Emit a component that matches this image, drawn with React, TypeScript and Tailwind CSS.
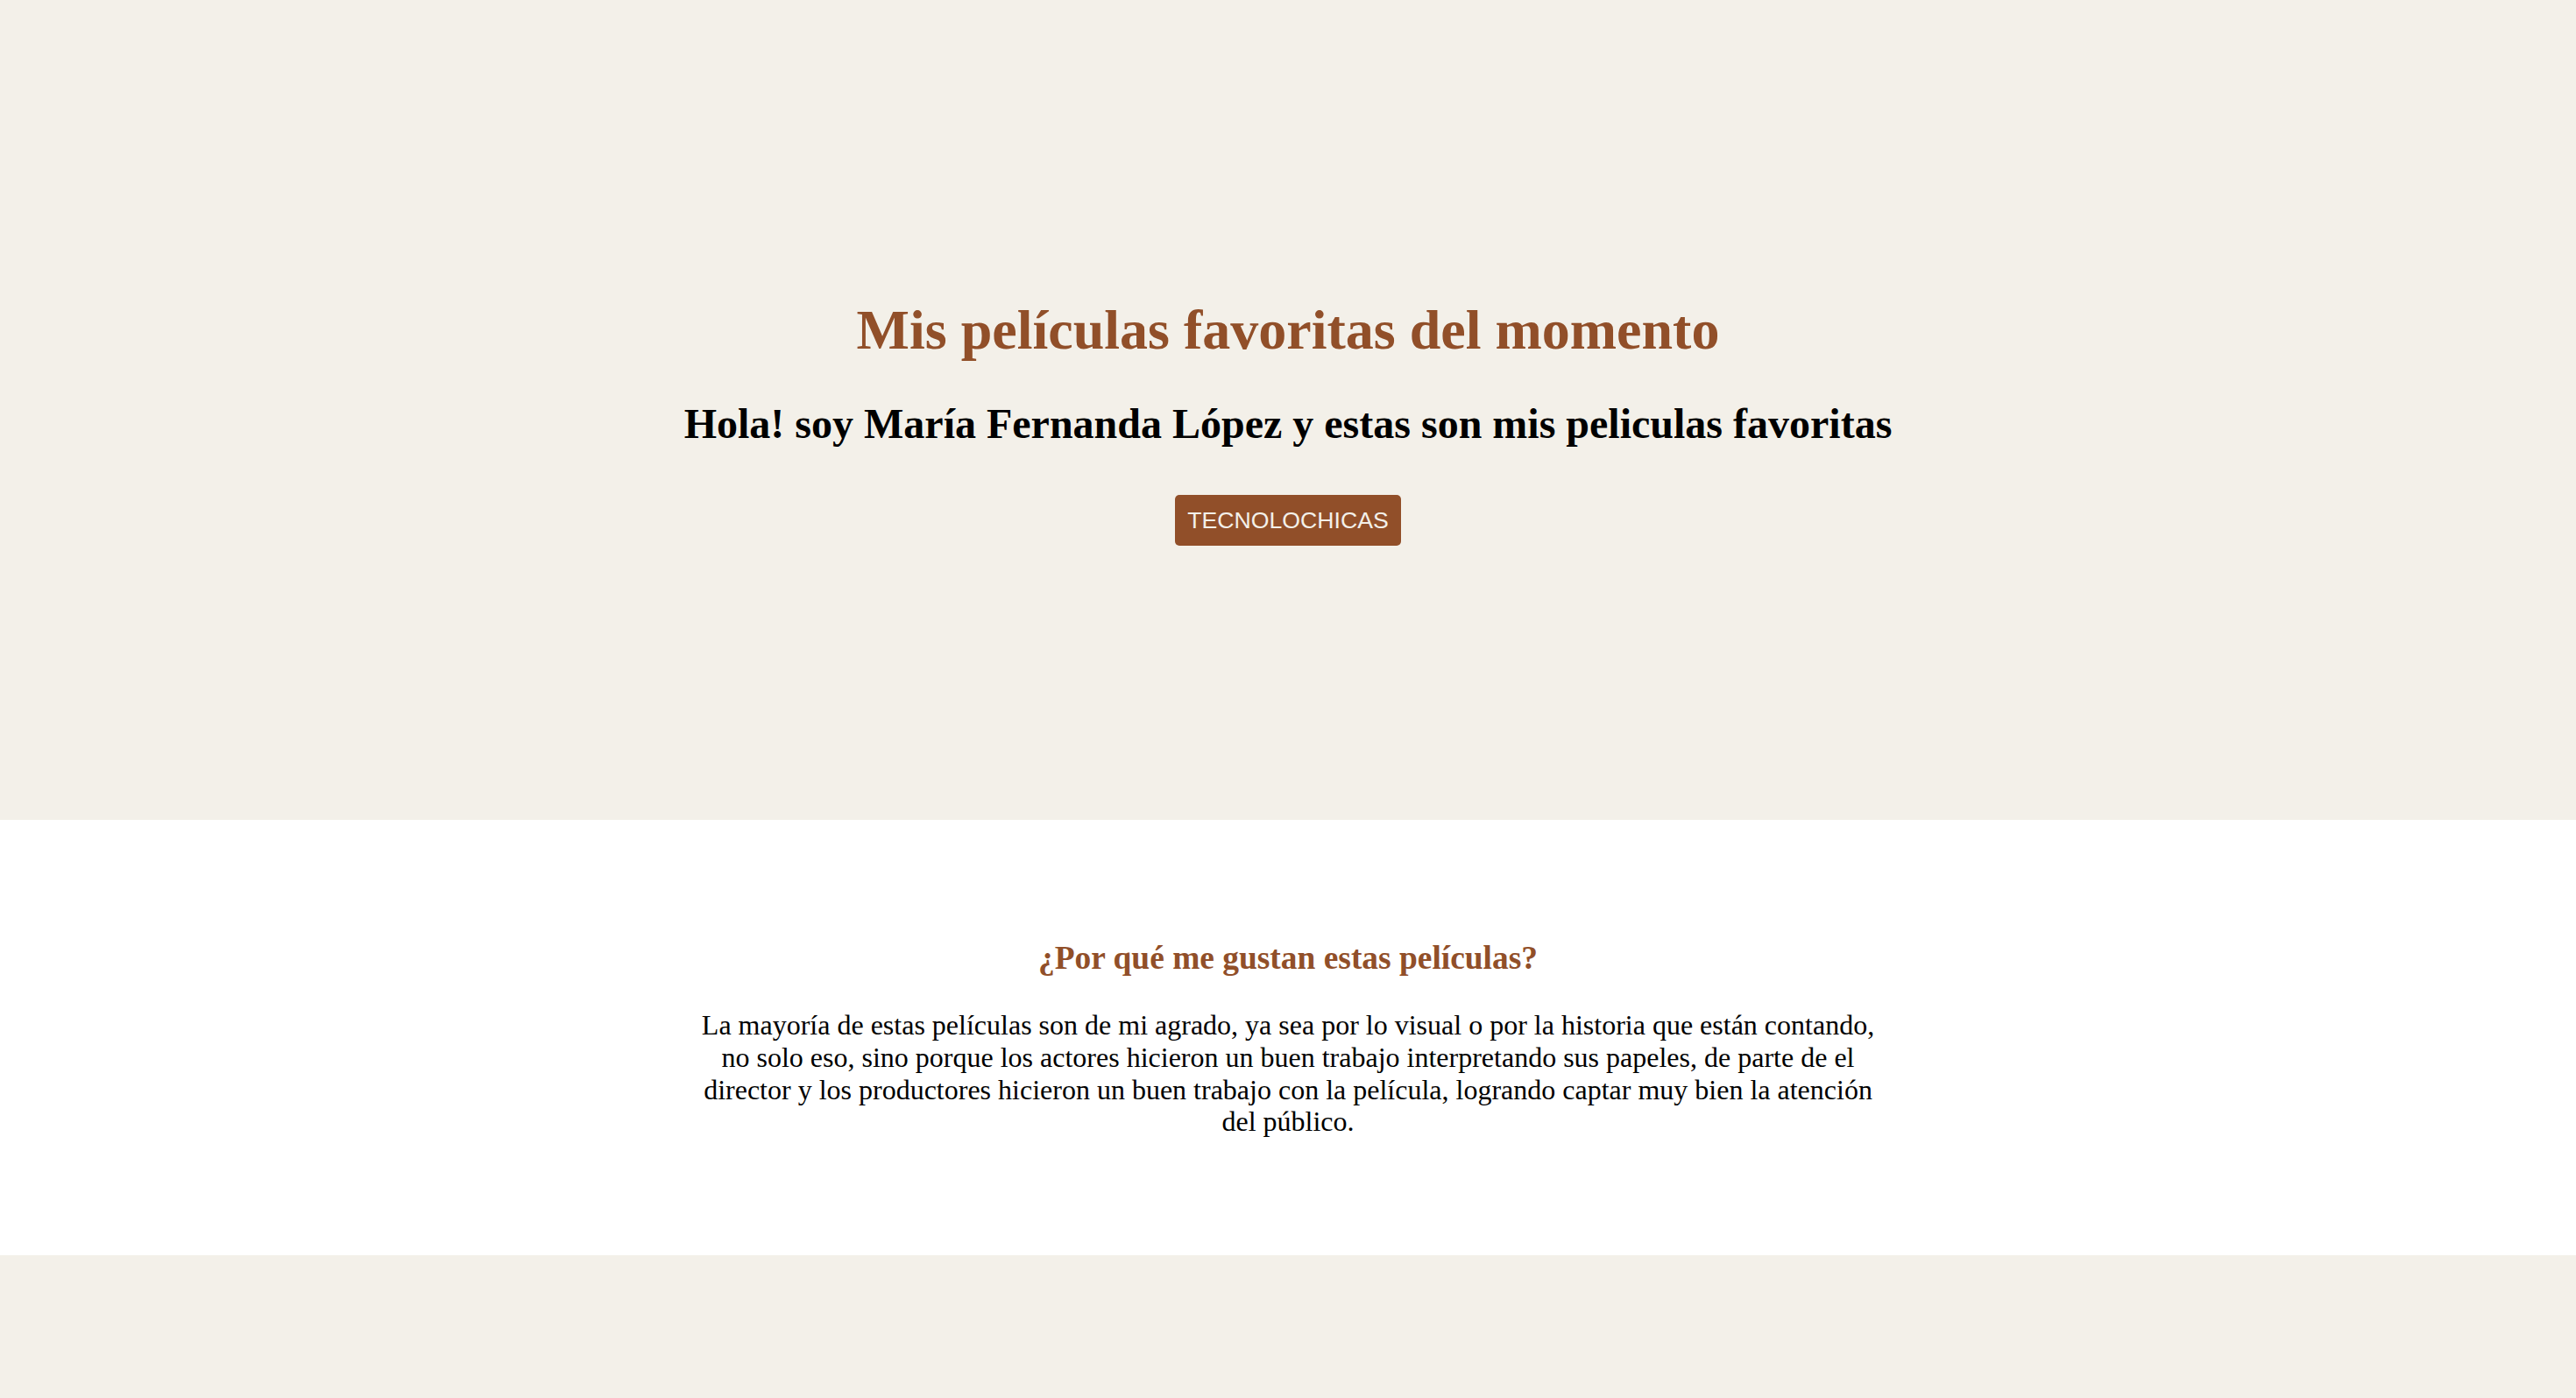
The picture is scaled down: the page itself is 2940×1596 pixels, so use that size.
export default function App() {
    return (
        <div className="min-h-[1596px] bg-[#f3f0e9] font-['Liberation_Serif',serif] text-black">
            {/* Hero */}
            <header className="h-[936px] flex flex-col items-center pt-[340px] text-center">
                <h1 className="text-[64px] leading-[1.15] font-bold text-[#914f29] mb-[42px]">
                    Mis películas favoritas del momento
                </h1>
                <h2 className="text-[48px] leading-[1.15] font-bold mb-[54px]">
                    Hola! soy María Fernanda López y estas son mis peliculas favoritas
                </h2>
                <button className="bg-[#914f29] text-[#f3f0e9] font-['Liberation_Sans',Arial,sans-serif] text-[26.67px] leading-[1.15] px-[14px] py-[14px] rounded-[5px]">
                    TECNOLOCHICAS
                </button>
            </header>

            {/* Por qué */}
            <section className="bg-white h-[497px] pt-[136px] flex flex-col items-center text-center">
                <h3 className="text-[37.44px] leading-[1.15] font-bold text-[#914f29] mb-[37px]">
                    ¿Por qué me gustan estas películas?
                </h3>
                <p className="max-w-[1370px] text-[32px] leading-[1.15]">
                    La mayoría de estas películas son de mi agrado, ya sea por lo visual o por la historia que están contando, no solo eso, sino porque los actores hicieron un buen trabajo interpretando sus papeles, de parte de el director y los productores hicieron un buen trabajo con la película, logrando captar muy bien la atención del público.
                </p>
            </section>
        </div>
    );
}
